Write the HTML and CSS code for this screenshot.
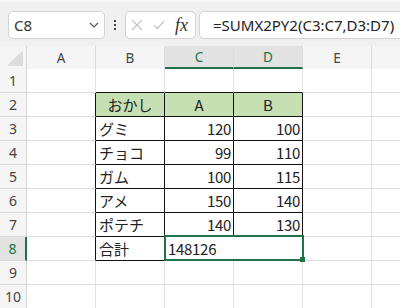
FILE: index.html
```html
<!DOCTYPE html>
<html lang="ja">
<head>
  <meta charset="UTF-8">
  <meta name="viewport" content="width=device-width, initial-scale=1.0">
  <title>SUMX2PY2</title>
  <link rel="stylesheet" href="styles.css">
</head>
<body>
  <!-- Formula bar -->
  <div class="toolbar">
    <div class="namebox">
      <span>C8</span>
      <svg width="10" height="6" viewBox="0 0 10 6"><path d="M1 1 L5 5 L9 1" fill="none" stroke="#555" stroke-width="1.2"/></svg>
    </div>
    <div class="dots"><i></i><i></i><i></i></div>
    <div class="fxbox">
      <svg width="12" height="12" viewBox="0 0 12 12"><path d="M1 1 L11 11 M11 1 L1 11" stroke="#c4c4c4" stroke-width="1.2"/></svg>
      <svg width="12" height="10" viewBox="0 0 12 10"><path d="M1 5 L4.5 8.5 L11 1" fill="none" stroke="#c4c4c4" stroke-width="1.2"/></svg>
      <span class="fx">fx</span>
    </div>
    <div class="formula">=SUMX2PY2(C3:C7,D3:D7)</div>
  </div>

  <!-- Sheet -->
  <div class="sheet">
    <div class="corner"><span class="tri"></span></div>
    <div class="ch">A</div>
    <div class="ch">B</div>
    <div class="ch sel">C</div>
    <div class="ch sel">D</div>
    <div class="ch">E</div>
    <div class="ch last"></div>

    <div class="rh">1</div>
    <div class="c"></div>
    <div class="c top"></div>
    <div class="c top"></div>
    <div class="c top"></div>
    <div class="c"></div>
    <div class="c last"></div>

    <div class="rh">2</div>
    <div class="c left"></div>
    <div class="c t hd">おかし</div>
    <div class="c t hd">A</div>
    <div class="c t hd">B</div>
    <div class="c"></div>
    <div class="c last"></div>

    <div class="rh">3</div>
    <div class="c left"></div>
    <div class="c t">グミ</div>
    <div class="c t num">120</div>
    <div class="c t num">100</div>
    <div class="c"></div>
    <div class="c last"></div>

    <div class="rh">4</div>
    <div class="c left"></div>
    <div class="c t">チョコ</div>
    <div class="c t num">99</div>
    <div class="c t num">110</div>
    <div class="c"></div>
    <div class="c last"></div>

    <div class="rh">5</div>
    <div class="c left"></div>
    <div class="c t">ガム</div>
    <div class="c t num">100</div>
    <div class="c t num">115</div>
    <div class="c"></div>
    <div class="c last"></div>

    <div class="rh">6</div>
    <div class="c left"></div>
    <div class="c t">アメ</div>
    <div class="c t num">150</div>
    <div class="c t num">140</div>
    <div class="c"></div>
    <div class="c last"></div>

    <div class="rh">7</div>
    <div class="c left"></div>
    <div class="c t">ポテチ</div>
    <div class="c t num">140</div>
    <div class="c t num">130</div>
    <div class="c"></div>
    <div class="c last"></div>

    <div class="rh sel">8</div>
    <div class="c left"></div>
    <div class="c t">合計</div>
    <div class="c t active">148126</div>
    <div class="c"></div>
    <div class="c last"></div>

    <div class="rh">9</div>
    <div class="c"></div>
    <div class="c"></div>
    <div class="c"></div>
    <div class="c"></div>
    <div class="c"></div>
    <div class="c last"></div>

    <div class="rh">10</div>
    <div class="c"></div>
    <div class="c"></div>
    <div class="c"></div>
    <div class="c"></div>
    <div class="c"></div>
    <div class="c last"></div>
  </div>
</body>
</html>
```

FILE: styles.css
```css
/* Reset */
* {
  margin: 0;
  padding: 0;
  box-sizing: border-box;
}

body {
  width: 400px;
  height: 308px;
  overflow: hidden;
  background-color: #ffffff;
  font-family: 'Noto Sans', 'Noto Sans CJK JP', sans-serif;
  color: #222;
}

/* Formula bar */
.toolbar {
  display: flex;
  align-items: center;
  height: 46px;
  padding: 10px 0 8px 8px;
  background-color: #f0f0f0;
  border-top: 2px solid #f9f9f9;
}

.namebox {
  display: flex;
  align-items: center;
  justify-content: space-between;
  width: 97px;
  height: 28px;
  padding: 0 5px 0 5px;
  background-color: #ffffff;
  border: 1px solid #d2d2d2;
  border-radius: 5px;
  font-size: 15px;
  color: #333;
}

.dots {
  display: flex;
  flex-direction: column;
  gap: 2px;
  margin-left: 9px;
}

.dots i {
  display: block;
  width: 2px;
  height: 2px;
  background-color: #444;
}

.fxbox {
  display: flex;
  align-items: center;
  gap: 10px;
  width: 71px;
  height: 28px;
  margin-left: 9px;
  padding-left: 5px;
  background-color: #ffffff;
  border: 1px solid #d2d2d2;
  border-radius: 5px;
}

.fxbox .fx {
  font-family: 'Liberation Serif', serif;
  font-style: italic;
  font-size: 18px;
  color: #333;
  margin-left: 0;
}

.formula {
  flex: 1;
  height: 28px;
  margin-left: 3px;
  margin-right: -10px;
  padding-left: 13px;
  line-height: 26px;
  background-color: #ffffff;
  border: 1px solid #d2d2d2;
  border-radius: 5px;
  font-size: 15px;
  color: #222;
  white-space: nowrap;
}

/* Sheet grid */
.sheet {
  display: grid;
  grid-template-columns: 27px repeat(5, 69px) 1fr;
  grid-template-rows: 23px;
  grid-auto-rows: 24px;
  font-family: 'Noto Sans CJK JP', sans-serif;
  font-size: 15px;
}

.corner {
  position: relative;
  background-color: #f5f5f5;
  border-right: 1px solid #d4d4d4;
}

.corner .tri {
  position: absolute;
  right: 3px;
  bottom: 3px;
  width: 0;
  height: 0;
  border-left: 16px solid transparent;
  border-bottom: 16px solid #dcdcdc;
}

.ch {
  display: flex;
  align-items: center;
  justify-content: center;
  background-color: #f5f5f5;
  border-right: 1px solid #dcdcdc;
  font-family: 'Noto Sans', sans-serif;
  font-size: 13.5px;
  color: #444;
}

.ch.sel {
  background-color: #e2e2e2;
  color: #217346;
  border-bottom: 2px solid #217346;
}

.ch.last {
  border-right: none;
}

.rh {
  display: flex;
  align-items: center;
  justify-content: center;
  background-color: #f5f5f5;
  border-right: 1px solid #d4d4d4;
  border-bottom: 1px solid #dcdcdc;
  font-family: 'Noto Sans', sans-serif;
  font-size: 14px;
  color: #444;
}

.rh.sel {
  background-color: #e2e2e2;
  color: #217346;
  border-right: 2px solid #217346;
}

.c {
  display: flex;
  align-items: center;
  padding: 0 3px;
  border-right: 1px solid #e1e1e1;
  border-bottom: 1px solid #e1e1e1;
  white-space: nowrap;
}

.c.last {
  border-right: none;
}

/* Bordered table */
.c.top {
  border-bottom-color: #111;
}

.c.left {
  border-right-color: #111;
}

.c.t {
  border-right-color: #111;
  border-bottom-color: #111;
}

.c.hd {
  justify-content: center;
  background-color: #c6e0b4;
}

.c.num {
  justify-content: flex-end;
  padding-right: 2px;
  letter-spacing: -0.3px;
}

/* Selected merged cell C8:D8 */
.c.active {
  grid-column: span 2;
  position: relative;
  padding-left: 3px;
  letter-spacing: -0.3px;
}

.c.active::after {
  content: '';
  position: absolute;
  top: -2px;
  left: -1px;
  right: -2px;
  bottom: -1px;
  border: 2px solid #217346;
}

.c.active::before {
  content: '';
  position: absolute;
  right: -3px;
  bottom: -2px;
  width: 5px;
  height: 5px;
  background-color: #217346;
  z-index: 1;
}
```
